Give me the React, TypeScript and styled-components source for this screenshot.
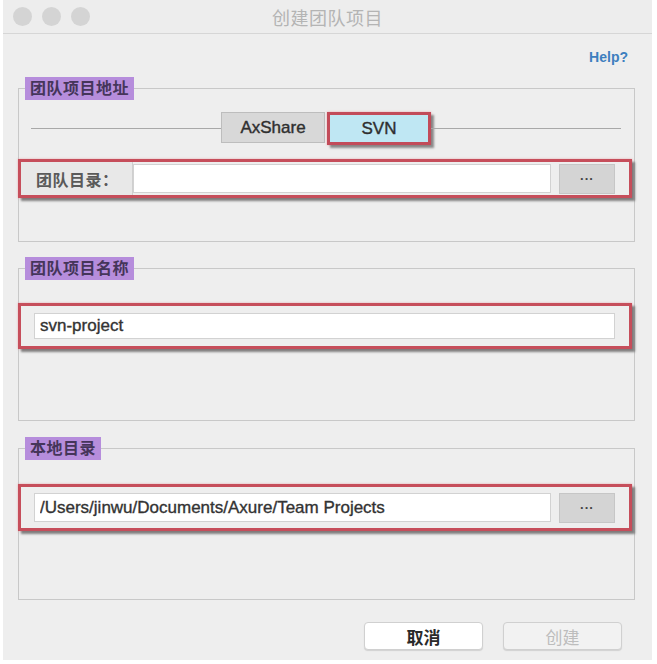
import styled, { createGlobalStyle } from 'styled-components';

const GlobalStyle = createGlobalStyle`
  html, body {
    margin: 0;
    padding: 0;
    background: #ffffff;
  }
  body {
    font-family: "Liberation Sans", "Noto Sans CJK SC", Arial, sans-serif;
  }
`;

const cjk = `"Liberation Sans", "Noto Sans CJK SC", sans-serif`;

const Window = styled.div`
  width: 649px;
  height: 660px;
  margin-left: 3px;
  background: #eeeeee;
  display: flex;
  flex-direction: column;
`;

const TitleBar = styled.div`
  height: 33px;
  border-bottom: 1px solid #d6d6d6;
  background: #ededed;
  display: grid;
  grid-template-columns: 1fr auto 1fr;
  align-items: center;
  padding: 0 10px;
`;

const Lights = styled.div`
  display: flex;
  gap: 10px;
`;

const Light = styled.span`
  width: 19px;
  height: 19px;
  border-radius: 50%;
  background: #d4d4d4;
`;

const Title = styled.div`
  font-family: ${cjk};
  font-size: 18px;
  color: #b4b4b4;
  letter-spacing: 0.5px;
`;

const Body = styled.div`
  padding: 0 17px 0 15px;
  display: flex;
  flex-direction: column;
`;

const HelpRow = styled.div`
  margin-top: 14px;
  height: 18px;
  line-height: 18px;
  text-align: right;
  padding-right: 7px;
  font-size: 14px;
  font-weight: bold;
  color: #3d7fbf;
`;

const Group = styled.fieldset<{ $top: number; $padTop: number; $padBottom: number }>`
  margin: ${p => p.$top}px 0 0 0;
  padding: ${p => p.$padTop}px 2px ${p => p.$padBottom}px 0;
  border: 1px solid #c8c8c8;
  min-width: 0;
`;

const Legend = styled.legend`
  margin-left: 6px;
  padding: 0 5px;
  height: 23px;
  line-height: 23px;
  background: #b68ddc;
  color: #45355a;
  font-family: ${cjk};
  font-size: 16px;
  font-weight: bold;
  letter-spacing: 0.5px;
`;

const TabRow = styled.div`
  display: flex;
  align-items: flex-start;
  padding: 0 11px 0 12px;
`;

const TabLine = styled.div`
  flex: 1;
  height: 1px;
  margin-top: 16px;
  background: #a8a8a8;
`;

const Tab = styled.div<{ $active?: boolean }>`
  width: ${p => (p.$active ? 98 : 102)}px;
  height: ${p => (p.$active ? 27 : 29)}px;
  margin-left: ${p => (p.$active ? 2 : 0)}px;
  display: flex;
  align-items: center;
  justify-content: center;
  font-size: 17px;
  color: #2f2f2f;
  -webkit-text-stroke: 0.4px #2f2f2f;
  background: ${p => (p.$active ? '#bfe7f3' : '#d8d8d8')};
  border: ${p => (p.$active ? '3px solid #c24b59' : '1px solid #bdbdbd')};
  box-shadow: ${p =>
    p.$active ? '3px 3px 2px rgba(60, 60, 60, 0.55), 0 0 2px rgba(230, 120, 130, 0.6)' : 'none'};
`;

const Marked = styled.div<{ $top?: number; $height: number }>`
  margin: ${p => p.$top ?? 0}px 0 0 -1px;
  height: ${p => p.$height}px;
  box-sizing: border-box;
  border: 3px solid #c64e5b;
  box-shadow: 3px 3px 2px rgba(60, 60, 60, 0.6), 0 0 2px rgba(230, 120, 130, 0.6);
  display: flex;
  align-items: center;
  padding: 0 14px 0 0;
`;

const Label = styled.div`
  align-self: stretch;
  width: 96px;
  padding-left: 15px;
  display: flex;
  align-items: center;
  background: #e8e8e8;
  border-right: 1px solid #cfcfcf;
  font-family: ${cjk};
  font-size: 16px;
  font-weight: bold;
  color: #5a5a5a;
  letter-spacing: 0.5px;
`;

const Field = styled.input<{ $height: number }>`
  flex: 1;
  min-width: 0;
  height: ${p => p.$height}px;
  box-sizing: border-box;
  margin: 0;
  padding: 0 5px;
  border: 1px solid #d2d2d2;
  background: #ffffff;
  font-family: "Liberation Sans", Arial, sans-serif;
  font-size: 17px;
  color: #333333;
  -webkit-text-stroke: 0.35px #333333;
  outline: none;
`;

const Indent = styled.div`
  width: 13px;
`;

const Browse = styled.button`
  width: 56px;
  height: 30px;
  margin-left: 8px;
  padding: 0 0 6px;
  border: 1px solid #c6c6c6;
  background: #d4d4d4;
  color: #444444;
  font-family: "Liberation Sans", Arial, sans-serif;
  font-size: 13px;
  font-weight: bold;
  letter-spacing: 1px;
`;

const Footer = styled.div`
  display: flex;
  justify-content: flex-end;
  gap: 20px;
  margin-top: 22px;
  padding-right: 13px;
`;

const Action = styled.button<{ $disabled?: boolean }>`
  width: 119px;
  height: 28px;
  border: 1px solid #d0d0d0;
  border-radius: 4px;
  background: ${p => (p.$disabled ? '#f2f2f2' : '#ffffff')};
  box-shadow: 0 1px 1px rgba(0, 0, 0, 0.12);
  font-family: ${cjk};
  font-size: 17px;
  font-weight: ${p => (p.$disabled ? 'normal' : 'bold')};
  color: ${p => (p.$disabled ? '#bdbdbd' : '#2a2a2a')};
`;

export default function App() {
  return (
    <>
      <GlobalStyle />
      <Window>
        <TitleBar>
          <Lights>
            <Light />
            <Light />
            <Light />
          </Lights>
          <Title>创建团队项目</Title>
          <div />
        </TitleBar>
        <Body>
          <HelpRow>Help?</HelpRow>

          <Group $top={11} $padTop={12} $padBottom={43}>
            <Legend>团队项目地址</Legend>
            <TabRow>
              <TabLine />
              <Tab>AxShare</Tab>
              <Tab $active>SVN</Tab>
              <TabLine />
            </TabRow>
            <Marked $top={14} $height={39}>
              <Label>团队目录：</Label>
              <Field $height={29} defaultValue="" readOnly />
              <Browse>...</Browse>
            </Marked>
          </Group>

          <Group $top={15} $padTop={23} $padBottom={71}>
            <Legend>团队项目名称</Legend>
            <Marked $height={46}>
              <Indent />
              <Field $height={26} defaultValue="svn-project" readOnly />
            </Marked>
          </Group>

          <Group $top={16} $padTop={24} $padBottom={68}>
            <Legend>本地目录</Legend>
            <Marked $height={47}>
              <Indent />
              <Field $height={29} defaultValue="/Users/jinwu/Documents/Axure/Team Projects" readOnly />
              <Browse>...</Browse>
            </Marked>
          </Group>

          <Footer>
            <Action>取消</Action>
            <Action $disabled>创建</Action>
          </Footer>
        </Body>
      </Window>
    </>
  );
}
